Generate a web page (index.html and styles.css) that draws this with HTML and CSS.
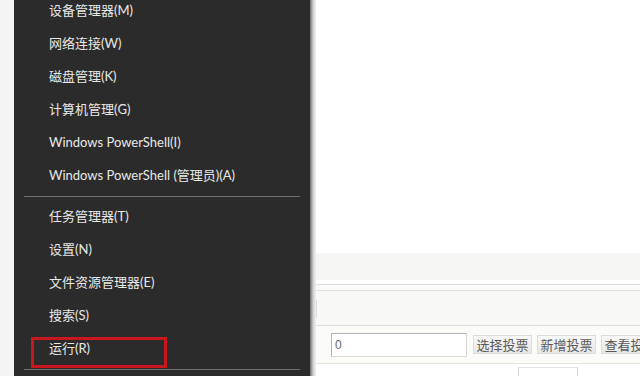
FILE: index.html
```html
<!DOCTYPE html>
<html>
<head>
    <meta charset="utf-8">
    <link rel="stylesheet" href="styles.css">
</head>
<body>
    <div class="strip"></div>

    <div class="menu">
        <ul class="menu-list">
            <li class="item">设备管理器(M)</li>
            <li class="item">网络连接(W)</li>
            <li class="item">磁盘管理(K)</li>
            <li class="item">计算机管理(G)</li>
            <li class="item">Windows PowerShell(I)</li>
            <li class="item">Windows PowerShell (管理员)(A)</li>
            <li class="sep"></li>
            <li class="item">任务管理器(T)</li>
            <li class="item">设置(N)</li>
            <li class="item">文件资源管理器(E)</li>
            <li class="item">搜索(S)</li>
            <li class="item marked">运行(R)<span class="mark"></span></li>
            <li class="sep"></li>
        </ul>
    </div>

    <div class="edge"></div>

    <div class="page">
        <div class="blank"></div>
        <div class="band"></div>
        <div class="rule"></div>
        <div class="gap"></div>
        <div class="tabs"><span class="tab"></span></div>
        <div class="toolbar">
            <div class="field">0</div>
            <button class="btn">选择投票</button>
            <button class="btn">新增投票</button>
            <button class="btn">查看投票</button>
        </div>
        <div class="footer"><span class="box"></span></div>
    </div>
</body>
</html>
```

FILE: styles.css
```css
body {
    margin: 0;
    width: 640px;
    height: 376px;
    overflow: hidden;
    display: flex;
    background-color: #f4f4f4;
    font-family: "Noto Sans CJK SC", "Noto Sans", sans-serif;
}
.strip {
    width: 14px;
    flex-shrink: 0;
    background-color: #f4f4f4;
}
.menu {
    width: 296px;
    flex-shrink: 0;
    background-color: #2b2b2b;
    color: #e8e8e8;
    font-family: Lato, "Noto Sans CJK SC", sans-serif;
}
.menu-list {
    list-style: none;
    margin: -6px 0 0 0;
    padding: 0;
}
.item {
    position: relative;
    height: 33px;
    line-height: 33px;
    padding-left: 35px;
    font-size: 13px;
    white-space: nowrap;
}
.sep {
    height: 8px;
    display: flex;
    align-items: center;
    padding: 0 10px;
}
.sep::before {
    content: "";
    flex: 1;
    height: 1px;
    background-color: #6e6e6e;
}
.mark {
    position: absolute;
    left: 17px;
    top: 5px;
    width: 130px;
    height: 25px;
    border: 3px solid #c9171d;
}
.edge {
    width: 6px;
    flex-shrink: 0;
    background: linear-gradient(to right, #6a6a6a, #a8a8a8 30%, #d6d6d6 60%, #f2f2f2);
}
.page {
    flex: 1;
    display: flex;
    flex-direction: column;
    background-color: #ffffff;
}
.page > div {
    flex-shrink: 0;
}
.blank {
    height: 253px;
    background-color: #ffffff;
}
.band {
    height: 27px;
    background-color: #f5f6f3;
}
.rule {
    height: 4px;
    border-bottom: 1px solid #dedede;
    background-color: #ffffff;
}
.gap {
    height: 5px;
    background-color: #fafafa;
}
.tabs {
    height: 34px;
    border-top: 1px solid #e2e2e2;
    border-bottom: 1px solid #e0e0e0;
    background-color: #f8f8f7;
}
.tab {
    display: block;
    width: 1px;
    height: 18px;
    margin-top: 9px;
    background-color: #dddddd;
}
.toolbar {
    height: 37px;
    display: flex;
    align-items: center;
    gap: 5px;
    padding-left: 15px;
    background-color: #fbfbf8;
    border-bottom: 1px solid #e4e4e4;
}
.field {
    width: 131px;
    height: 22px;
    line-height: 22px;
    padding-left: 3px;
    margin-right: 1px;
    border: 1px solid #c4c4c4;
    border-color: #b4b4b4 #d8d8d8 #d8d8d8 #b4b4b4;
    background-color: #ffffff;
    font-family: "Liberation Sans", sans-serif;
    font-size: 12px;
    color: #666666;
}
.btn {
    flex-shrink: 0;
    width: 59px;
    height: 19px;
    padding: 0;
    border: 1px solid #dcdcdc;
    border-radius: 0;
    background: linear-gradient(#f8f8f8, #e7e7e7);
    font-family: "Noto Sans CJK SC", sans-serif;
    font-size: 13px;
    line-height: 17px;
    color: #5a5a5a;
}
.footer {
    flex: 1;
    background-color: #ffffff;
    padding-left: 202px;
    padding-top: 3px;
}
.box {
    display: block;
    width: 58px;
    height: 9px;
    border-left: 1px solid #d4d4d4;
    border-right: 1px solid #d4d4d4;
    border-top: 1px solid #e4e4e4;
}
```
